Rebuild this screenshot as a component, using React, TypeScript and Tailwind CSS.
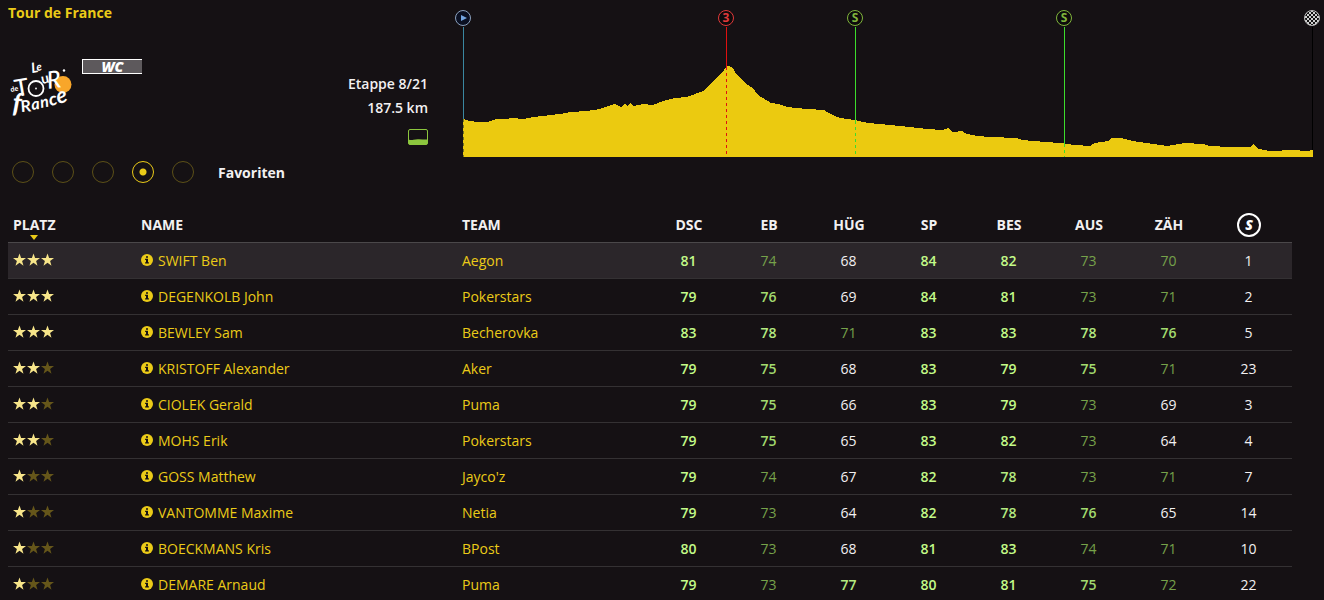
import { useState } from "react";

type Rider = {
  stars: number;
  name: string;
  team: string;
  values: number[];
  sprint: number;
};

const riders: Rider[] = [
  { stars: 3, name: "SWIFT Ben", team: "Aegon", values: [81, 74, 68, 84, 82, 73, 70], sprint: 1 },
  { stars: 3, name: "DEGENKOLB John", team: "Pokerstars", values: [79, 76, 69, 84, 81, 73, 71], sprint: 2 },
  { stars: 3, name: "BEWLEY Sam", team: "Becherovka", values: [83, 78, 71, 83, 83, 78, 76], sprint: 5 },
  { stars: 2, name: "KRISTOFF Alexander", team: "Aker", values: [79, 75, 68, 83, 79, 75, 71], sprint: 23 },
  { stars: 2, name: "CIOLEK Gerald", team: "Puma", values: [79, 75, 66, 83, 79, 73, 69], sprint: 3 },
  { stars: 2, name: "MOHS Erik", team: "Pokerstars", values: [79, 75, 65, 83, 82, 73, 64], sprint: 4 },
  { stars: 1, name: "GOSS Matthew", team: "Jayco'z", values: [79, 74, 67, 82, 78, 73, 71], sprint: 7 },
  { stars: 1, name: "VANTOMME Maxime", team: "Netia", values: [79, 73, 64, 82, 78, 76, 65], sprint: 14 },
  { stars: 1, name: "BOECKMANS Kris", team: "BPost", values: [80, 73, 68, 81, 83, 74, 71], sprint: 10 },
  { stars: 1, name: "DEMARE Arnaud", team: "Puma", values: [79, 73, 77, 80, 81, 75, 72], sprint: 22 },
];

const skills = ["DSC", "EB", "HÜG", "SP", "BES", "AUS", "ZÄH"];
const views = ["Etappe", "Profil", "Ergebnis", "Favoriten", "Wertung"];

// Elevation samples as [x, y] in chart units, y measured from the top.
const profile: [number, number][] = [
  [0, 119], [7, 121], [14, 122], [24, 122], [34, 119], [42, 119], [50, 118], [60, 119], [70, 117], [80, 116],
  [87, 115], [97, 114], [107, 112], [124, 111], [130, 110], [137, 109], [145, 106], [152, 104], [158, 107], [162, 104], [164, 106],
  [167, 103], [170, 106], [180, 104], [190, 105], [200, 101], [212, 98], [224, 97], [232, 94], [240, 91], [245, 86],
  [250, 81], [253, 78], [258, 74], [264, 66], [269, 67], [274, 75], [280, 81], [285, 85], [290, 88], [295, 95], [300, 98],
  [308, 103], [315, 104], [324, 107], [344, 109], [361, 110], [366, 113], [370, 115], [377, 118], [392, 120],
  [405, 123], [417, 124], [437, 126], [464, 129], [479, 130], [485, 128], [490, 132], [499, 131], [504, 134],
  [515, 136], [527, 137], [554, 138], [559, 140], [570, 141], [597, 143], [612, 145], [627, 146], [632, 143], [645, 141],
  [649, 138], [658, 138], [670, 141], [690, 144], [704, 146], [722, 143], [740, 144], [747, 146], [767, 147],
  [787, 147], [790, 144], [796, 149], [807, 151], [830, 150], [844, 151], [850, 150],
];

const area = `M0 157 ${profile.map(([x, y]) => `L${x} ${y}`).join(" ")} V157 Z`;

function valueColor(v: number) {
  if (v >= 79) return "text-[#c3fb88] font-semibold";
  if (v >= 77) return "text-[#b4ea80] font-semibold";
  if (v >= 75) return "text-[#a2da6e] font-semibold";
  if (v >= 70) return "text-[#76a24a] font-medium";
  return "text-[#f2f0f1] font-medium";
}

function Star({ on }: { on: boolean }) {
  return (
    <svg width="14" height="14" viewBox="0 0 14 14" className={on ? "text-[#f7e58a]" : "text-[#65561a]"} aria-hidden="true">
      <path fill="currentColor" d="M6.5 0.4 8.1 5H13L9.1 7.9 10.5 12.7 6.5 9.8 2.5 12.7 3.9 7.9 0 5H4.9Z" />
    </svg>
  );
}

function InfoIcon() {
  return (
    <svg width="12" height="12" viewBox="0 0 12 12" className="mb-[2px] shrink-0" aria-hidden="true">
      <circle cx="6" cy="6" r="6" fill="#ebcb18" />
      <path fill="#151114" d="M5 2.2h2v1.6H5ZM4.1 4.8H7V8.2h.9v1.2H4.1V8.2H5V6h-.9Z" />
    </svg>
  );
}

function TourLogo() {
  return (
    <svg width="66" height="58" viewBox="8 60 66 58" className="overflow-visible" role="img" aria-label="Le Tour de France">
      <circle cx="63" cy="85.500" r="8.500" fill="#f8a62a" />
      <g fill="#fff" fontFamily="Lato, sans-serif" fontWeight="700">
        <text transform="translate(32 74) rotate(-10)" fontSize="14" fontStyle="italic">L</text>
        <text transform="translate(37 72) rotate(-10)" fontSize="11" fontStyle="italic">e</text>
        <text transform="translate(11 93) rotate(-12)" fontSize="7">de</text>
        <text transform="translate(16 98) rotate(-10)" fontSize="24" fontWeight="500">T</text>
        <text transform="translate(42 85) rotate(-12)" fontSize="14">u</text>
        <text transform="translate(48 90) rotate(-8)" fontSize="24" fontWeight="500" fontStyle="italic">R</text>
        <text transform="translate(12 113) rotate(4)" fontSize="27" fontStyle="italic">f</text>
        <text transform="translate(21 113) rotate(-4)" fontSize="16">R</text>
        <text transform="translate(32 111) rotate(-8)" fontSize="16" fontStyle="italic">a</text>
        <text transform="translate(41 109) rotate(-10)" fontSize="16" fontStyle="italic">n</text>
        <text transform="translate(50 107) rotate(-12)" fontSize="18" fontStyle="italic">c</text>
        <text transform="translate(58 105) rotate(-14)" fontSize="22" fontStyle="italic">e</text>
      </g>
      <circle cx="36" cy="89.500" r="7.500" fill="#151114" stroke="#fff" strokeWidth="1.800" />
      <circle cx="36" cy="89.500" r="0.900" fill="#fff" />
      <circle cx="64" cy="71.500" r="1.200" fill="#fff" />
    </svg>
  );
}

function CategoryBadge() {
  return (
    <span className="flex h-[15px] w-[60px] items-center justify-center border border-r-0 border-white bg-[#5d595c] text-sm leading-none font-extrabold text-white italic">
      WC
    </span>
  );
}

function FlatStageIcon() {
  return (
    <svg width="20" height="16" viewBox="0 0 20 16" role="img" aria-label="Flachetappe">
      <rect x="0.500" y="0.500" width="19" height="15" rx="1.500" fill="none" stroke="#8cc63e" />
      <path fill="#8cc63e" d="M0.500 10.500Q3 11.500 5.500 10.800T11 10.300T19.500 10.500V14Q19.500 15.500 18 15.500H2Q0.500 15.500 0.500 14Z" />
    </svg>
  );
}

type MarkerProps = { x: number; top: number; label: string; ring: string; line: string };

function Marker({ x, top, label, ring, line }: MarkerProps) {
  return (
    <g>
      <path d={`M${x + 0.5} 27V${top}`} stroke={line} shapeRendering="crispEdges" />
      <path d={`M${x + 0.5} ${top}V157`} stroke={line} strokeDasharray="3 3" shapeRendering="crispEdges" />
      <circle cx={x} cy="18" r="7.500" fill="#0d0b0c" stroke={ring} />
      <text x={x} y="22" textAnchor="middle" fill={ring} fontFamily="Open Sans, sans-serif" fontSize="12" fontWeight="700">
        {label}
      </text>
    </g>
  );
}

function StageProfile() {
  return (
    <svg viewBox="0 0 850 157" className="block w-full overflow-visible" role="img" aria-label="Höhenprofil der Etappe">
      <defs>
        <pattern id="checks" width="4" height="4" patternUnits="userSpaceOnUse">
          <rect width="4" height="4" fill="#d0d0d0" />
          <path d="M0 0h2v2H0ZM2 2h2v2H2Z" fill="#111" />
        </pattern>
      </defs>
      <path d={area} fill="#ebca10" shapeRendering="crispEdges" />
      <path d="M0.500 27V119" stroke="#3a87a0" shapeRendering="crispEdges" />
      <path d="M0.500 119V157" stroke="#77741f" strokeDasharray="3 3" shapeRendering="crispEdges" />
      <circle cx="0" cy="18" r="7.500" fill="#0a1022" stroke="#8aa0bd" />
      <path d="M-2 15L4 18L-2 21Z" fill="#73a5e0" />
      <Marker x={263} top={67} label="3" ring="#e0393a" line="#e01010" />
      <Marker x={392} top={121} label="S" ring="#80b53c" line="#3cdd2c" />
      <Marker x={601} top={144} label="S" ring="#80b53c" line="#3cdd2c" />
      <path d="M849.500 27V150" stroke="#000" shapeRendering="crispEdges" />
      <circle cx="849" cy="18" r="7.500" fill="url(#checks)" stroke="#b8b8b8" />
    </svg>
  );
}

export default function App() {
  const [view, setView] = useState("Favoriten");

  return (
    <main className="min-h-screen bg-[#151114] font-['Open_Sans',sans-serif] text-sm text-[#f2f0f1]">
      <header className="flex pr-[11px] pl-2">
        <div className="flex w-[420px] shrink-0 flex-col pt-[3px]">
          <h1 className="font-bold text-[#ebcb18]">Tour de France</h1>
          <div className="flex justify-between pt-9">
            <div className="flex items-start gap-2">
              <TourLogo />
              <CategoryBadge />
            </div>
            <div className="flex flex-col items-end pt-[13px] leading-6 font-semibold">
              <p>Etappe 8/21</p>
              <p>187.5 km</p>
              <div className="pt-[9px]">
                <FlatStageIcon />
              </div>
            </div>
          </div>
        </div>
        <div className="min-w-0 flex-1 pl-[35px]">
          <StageProfile />
        </div>
      </header>

      <fieldset className="flex items-center gap-[18px] px-3 pt-1">
        {views.map((v) => (
          <input
            key={v}
            type="radio"
            name="view"
            aria-label={v}
            checked={view === v}
            onChange={() => setView(v)}
            className="size-[22px] cursor-pointer appearance-none rounded-full border border-[#5c5018] checked:border-[#ebcb18] checked:bg-[radial-gradient(circle,#ebcb18_0_3px,transparent_4px)]"
          />
        ))}
        <span className="pt-[2px] pl-[6px] font-bold">{view}</span>
      </fieldset>

      <div className="pt-[23px] pr-8 pl-2">
        <table className="w-full table-fixed border-collapse">
          <colgroup>
            <col className="w-32" />
            <col className="w-80" />
            <col />
            {skills.map((s) => (
              <col key={s} className="w-20" />
            ))}
            <col className="w-20" />
          </colgroup>
          <thead>
            <tr className="h-9 border-b border-[#4b484a] text-left">
              <th className="px-[5px] pt-[2px] font-bold" aria-sort="descending">
                <button type="button" className="relative cursor-pointer font-bold">
                  PLATZ
                  <svg width="8" height="5" viewBox="0 0 8 5" className="absolute top-full left-[17px]" aria-hidden="true">
                    <path d="M0 0h8L4 5Z" fill="#ebcb18" />
                  </svg>
                </button>
              </th>
              <th className="px-[5px] pt-[2px] font-bold">NAME</th>
              <th className="px-[6px] pt-[2px] font-bold">TEAM</th>
              {skills.map((s) => (
                <th key={s} className="pt-[2px] pr-[6px] text-center font-bold">
                  {s}
                </th>
              ))}
              <th className="pt-[2px] pr-[6px]">
                <span className="mx-auto flex size-6 items-center justify-center rounded-full border-2 border-white font-extrabold text-white italic">
                  S
                </span>
              </th>
            </tr>
          </thead>
          <tbody>
            {riders.map((r, i) => (
              <tr key={r.name} className={i === 0 ? "h-9 border-b border-[#343133] bg-[#2b262a]" : "h-9 border-b border-[#343133]"}>
                <td className="px-[5px]">
                  <span className="flex" role="img" aria-label={`${r.stars} von 3 Sternen`}>
                    <Star on={r.stars > 0} />
                    <Star on={r.stars > 1} />
                    <Star on={r.stars > 2} />
                  </span>
                </td>
                <td className="px-[5px] pt-[2px]">
                  <a href="#fahrer" className="flex items-center gap-[5px] text-[#ebcb18]">
                    <InfoIcon />
                    {r.name}
                  </a>
                </td>
                <td className="px-[6px] pt-[2px]">
                  <a href="#team" className="text-[#ebcb18]">
                    {r.team}
                  </a>
                </td>
                {r.values.map((v, k) => (
                  <td key={skills[k]} className={`pt-[2px] pr-[7px] text-center ${valueColor(v)}`}>
                    {v}
                  </td>
                ))}
                <td className="pt-[2px] pr-[7px] text-center font-medium">{r.sprint}</td>
              </tr>
            ))}
          </tbody>
        </table>
      </div>
    </main>
  );
}
